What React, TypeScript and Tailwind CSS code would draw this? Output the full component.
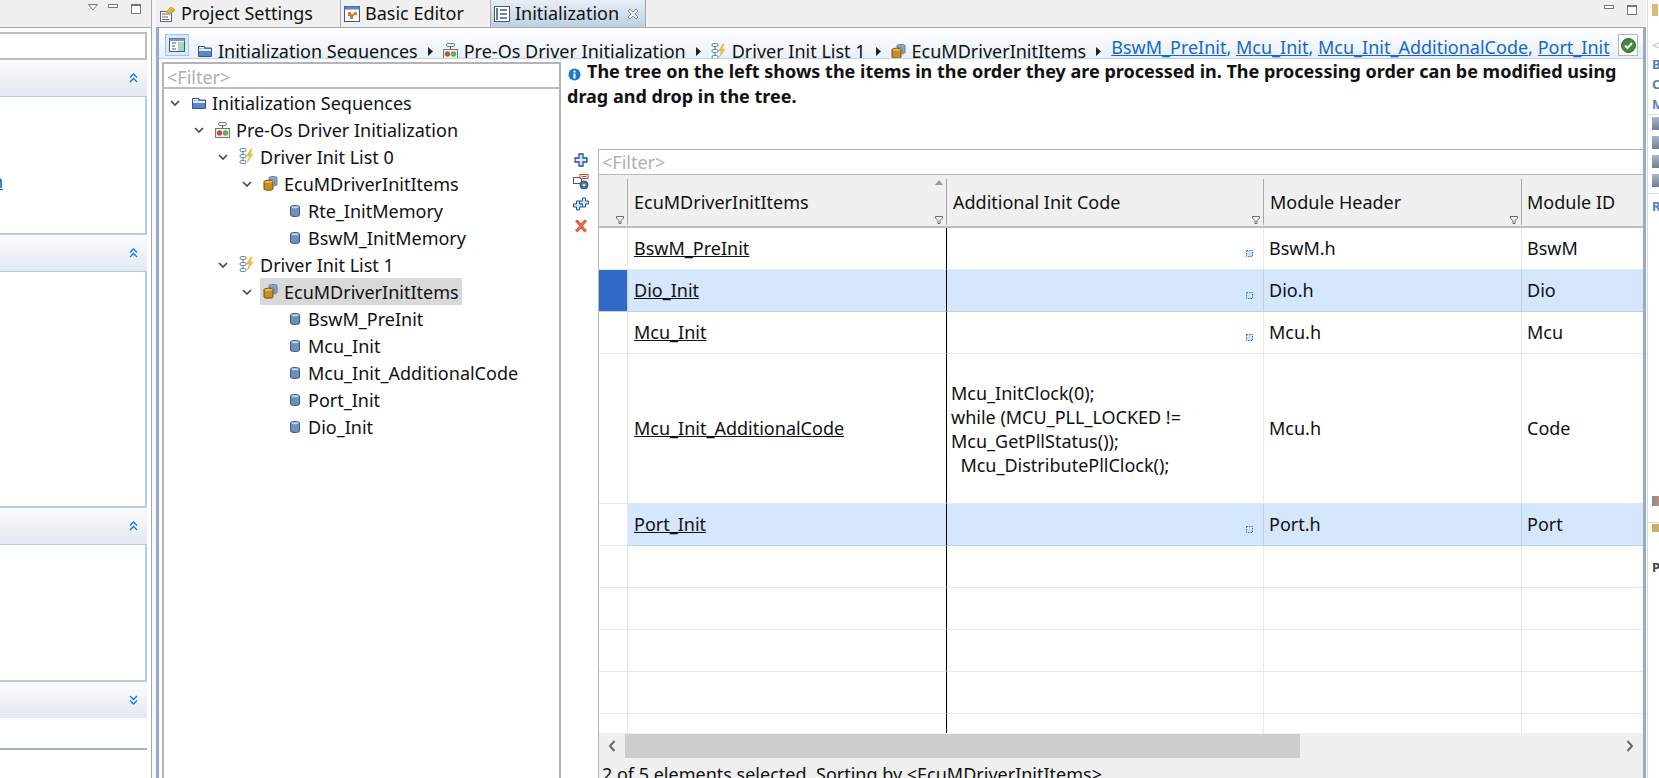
import type { ReactNode } from "react";

const font = "font-['Noto_Sans','Open_Sans',sans-serif]";

function FolderIcon() {
  return (
    <svg width="14" height="14" viewBox="0 0 14 14" className="shrink-0">
      <path d="M.5 2.500h6l1 1.500h6v8.500h-13z" fill="#5b86c0" stroke="#2f5a96" />
      <rect x="1" y="3" width="5" height="1.500" fill="#fff" />
      <rect x="1" y="5" width="12" height="2" fill="#dfe9f6" />
    </svg>
  );
}

function PreOsIcon() {
  return (
    <svg width="15" height="16" viewBox="0 0 15 16" className="shrink-0">
      <rect x="3.500" y=".5" width="8" height="3" rx="1.500" fill="#fff" stroke="#5b7fae" />
      <path d="M7.500 3.500v3" stroke="#b5304a" />
      <rect x=".5" y="6.500" width="14" height="9" fill="#eee" stroke="#777" />
      <circle cx="4.500" cy="11" r="2.300" fill="#e0463c" stroke="#8a2a22" strokeWidth=".6" />
      <circle cx="10.500" cy="11" r="2.300" fill="#5cc04a" stroke="#2d7a22" strokeWidth=".6" />
    </svg>
  );
}

function BoltListIcon() {
  return (
    <svg width="15" height="17" viewBox="0 0 15 17" className="shrink-0">
      <rect x="1" y=".5" width="6" height="3" rx="1.500" fill="#fff" stroke="#5b7fae" />
      <rect x="1" y="6.500" width="6" height="3" rx="1.500" fill="#fff" stroke="#5b7fae" />
      <rect x="1" y="12.500" width="6" height="3" rx="1.500" fill="#fff" stroke="#5b7fae" />
      <path d="M4 3.500v3M4 9.500v3" stroke="#5b7fae" />
      <path d="M12 1 7.500 8h3l-2 6 5.500-8h-3l2-5z" fill="#f1c22e" stroke="#c9971a" strokeWidth=".4" />
    </svg>
  );
}

function StackIcon() {
  return (
    <svg width="15" height="15" viewBox="0 0 15 15" className="shrink-0">
      <path d="M6 1.500c0-1.300 8-1.300 8 0v7c0 1-2 1.300-3 1.300V4H6z" fill="#8da7c9" stroke="#4d6a92" strokeWidth=".8" />
      <path d="M1 5.500c0-1.600 9-1.600 9 0v7.500c0 1.600-9 1.600-9 0z" fill="#c98f1e" stroke="#6f4c0c" />
      <ellipse cx="5.500" cy="5.800" rx="3.800" ry="1" fill="#e8bd58" />
    </svg>
  );
}

function CylinderIcon() {
  return (
    <svg width="10" height="12" viewBox="0 0 10 12" className="shrink-0">
      <path d="M.5 2c0-2 9-2 9 0v8c0 2-9 2-9 0z" fill="#6d8fbc" stroke="#3e5a82" />
      <ellipse cx="5" cy="2.300" rx="3.600" ry="1" fill="#c7d6ea" />
    </svg>
  );
}

function Chevron() {
  return (
    <svg width="10" height="6" viewBox="0 0 10 6">
      <path d="m1 1 4 4 4-4" fill="none" stroke="#444" strokeWidth="1.600" />
    </svg>
  );
}

function DoubleChevron({ down }: { down?: boolean }) {
  return (
    <svg width="9" height="10" viewBox="0 0 9 10" className={down ? "rotate-180" : ""}>
      <path d="m1 4.500 3.500-3.500 3.500 3.500M1 9l3.500-3.500L8 9" fill="none" stroke="#0b76d8" strokeWidth="1.300" />
    </svg>
  );
}

function MinButton() {
  return <div className="w-[10px] h-[4px] border border-[#777] bg-white" />;
}

function MaxButton() {
  return <div className="w-[10px] h-[10px] border border-[#777] border-t-2 bg-white" />;
}

function SmallArrow() {
  return (
    <svg width="5" height="9" viewBox="0 0 5 9" className="shrink-0">
      <path d="m0 0 5 4.500L0 9z" fill="#222" />
    </svg>
  );
}

function FilterGlyph() {
  return (
    <svg width="8" height="8" viewBox="0 0 8 8">
      <path d="M.5.5h7v1.500L5 4.500v3H3v-3L.5 2z" fill="#fff" stroke="#666" />
    </svg>
  );
}

function DotBox() {
  return (
    <svg width="7" height="7" viewBox="0 0 7 7" className="shrink-0">
      <rect x=".5" y=".5" width="6" height="6" fill="#cfe0f5" stroke="#2f78c8" strokeDasharray="1.500 1" />
    </svg>
  );
}

function PanelSection({ body, down, link }: { body: string; down?: boolean; link?: boolean }) {
  return (
    <>
      <div className="h-[36px] shrink-0 flex items-center justify-end pr-[9px] bg-gradient-to-b from-[#fbfcfd] to-[#e2e9f2]">
        <DoubleChevron down={down} />
      </div>
      <div className={`${body} shrink-0 border-r-2 border-b-2 border-t border-[#b7cbe1] bg-white overflow-hidden`}>
        {link && <div className="mt-[72px] -ml-[8px] text-[#0b63c4] underline leading-[24px]">n</div>}
      </div>
    </>
  );
}

function LeftPanel() {
  return (
    <div className="w-[151px] shrink-0 flex flex-col bg-white">
      <div className="h-[28px] shrink-0 bg-[#f0f0f0] border-b border-[#a8a8a8] flex items-center justify-end pr-[10px]">
        <svg width="10" height="7" viewBox="0 0 10 7" className="mb-[13px]">
          <path d="M.5.5h9L5 6z" fill="#fff" stroke="#777" />
        </svg>
        <div className="ml-[10px] mb-[15px]"><MinButton /></div>
        <div className="ml-[13px] mb-[9px]"><MaxButton /></div>
      </div>
      <div className="w-[147px] flex flex-col flex-1">
        <div className="h-[28px] mt-[4px] shrink-0 border-2 border-l-0 border-[#bdbdbd] bg-white" />
        <PanelSection body="h-[139px]" link />
        <PanelSection body="h-[237px]" />
        <PanelSection body="h-[138px]" />
        <div className="h-[36px] shrink-0 flex items-center justify-end pr-[9px] bg-gradient-to-b from-[#fbfcfd] to-[#e2e9f2]">
          <DoubleChevron down />
        </div>
        <div className="h-[32px] shrink-0 border-b-2 border-[#a9b6c2]" />
      </div>
    </div>
  );
}

type TreeItem = { level: 0 | 1 | 2 | 3 | 4; label: string; icon: ReactNode; selected?: boolean };

const levelPad = ["pl-[3px]", "pl-[27px]", "pl-[51px]", "pl-[75px]", "pl-[99px]"];

const treeItems: TreeItem[] = [
  { level: 0, label: "Initialization Sequences", icon: <FolderIcon /> },
  { level: 1, label: "Pre-Os Driver Initialization", icon: <PreOsIcon /> },
  { level: 2, label: "Driver Init List 0", icon: <BoltListIcon /> },
  { level: 3, label: "EcuMDriverInitItems", icon: <StackIcon /> },
  { level: 4, label: "Rte_InitMemory", icon: <CylinderIcon /> },
  { level: 4, label: "BswM_InitMemory", icon: <CylinderIcon /> },
  { level: 2, label: "Driver Init List 1", icon: <BoltListIcon /> },
  { level: 3, label: "EcuMDriverInitItems", icon: <StackIcon />, selected: true },
  { level: 4, label: "BswM_PreInit", icon: <CylinderIcon /> },
  { level: 4, label: "Mcu_Init", icon: <CylinderIcon /> },
  { level: 4, label: "Mcu_Init_AdditionalCode", icon: <CylinderIcon /> },
  { level: 4, label: "Port_Init", icon: <CylinderIcon /> },
  { level: 4, label: "Dio_Init", icon: <CylinderIcon /> },
];

function TreePane() {
  return (
    <div className="w-[399px] shrink-0 ml-[3px] mt-[3px] border-l-2 border-t-2 border-r-2 border-[#b4b4b4] flex flex-col bg-white">
      <div className="h-[25px] shrink-0 border-b-2 border-[#bdbdbd] pl-[3px] text-[#b0b0b0] leading-[26px]">&lt;Filter&gt;</div>
      <div>
        {treeItems.map((it, i) => (
          <div key={i} className={`h-[27px] flex items-center ${levelPad[it.level]}`}>
            <div className="w-[16px] shrink-0 flex justify-center">{it.level < 4 && <Chevron />}</div>
            <div className={`ml-[5px] h-[27px] flex items-center pl-[3px] pr-[3px] ${it.selected ? "bg-[#d9d9d9]" : ""}`}>
              <div className="w-[15px] shrink-0 flex justify-center">{it.icon}</div>
              <span className="ml-[6px] pt-[1px] whitespace-nowrap">{it.label}</span>
            </div>
          </div>
        ))}
      </div>
    </div>
  );
}

function BreadItem({ icon, label }: { icon: ReactNode; label: string }) {
  return (
    <div className="flex items-center gap-[6px] shrink-0">
      {icon}
      <span className="whitespace-nowrap">{label}</span>
    </div>
  );
}

function Breadcrumb() {
  return (
    <div className="h-[31px] shrink-0 border-b border-[#bcd3ea] bg-gradient-to-b from-[#ffffff] to-[#e9f0f8] flex pl-[6px] pr-[5px] overflow-hidden">
      <div className="w-[24px] h-[22px] mt-[6px] shrink-0 border border-[#9cc7ee] bg-[#d8e9f9] flex items-center justify-center">
        <svg width="16" height="14" viewBox="0 0 16 14">
          <rect x=".5" y=".5" width="15" height="13" fill="#fff" stroke="#44597a" />
          <rect x=".5" y=".5" width="15" height="2.500" fill="#7f99bd" />
          <rect x="9" y="4" width="6" height="9" fill="#a9d6c1" />
          <path d="M3 5h4M3 8h3M3 11h4" stroke="#44597a" />
        </svg>
      </div>
      <div className="flex-1 min-w-0 overflow-hidden flex items-center gap-[10px] pl-[9px] mt-[9px] h-[21px] leading-[26px] pt-[7px]">
        <BreadItem icon={<FolderIcon />} label="Initialization Sequences" />
        <SmallArrow />
        <BreadItem icon={<PreOsIcon />} label="Pre-Os Driver Initialization" />
        <SmallArrow />
        <BreadItem icon={<BoltListIcon />} label="Driver Init List 1" />
        <SmallArrow />
        <BreadItem icon={<StackIcon />} label="EcuMDriverInitItems" />
        <SmallArrow />
        <div className="flex shrink-0 whitespace-nowrap text-[#1668c8] -translate-y-1">
          <span className="underline">BswM_PreInit</span><span>,&nbsp;</span>
          <span className="underline">Mcu_Init</span><span>,&nbsp;</span>
          <span className="underline">Mcu_Init_AdditionalCode</span><span>,&nbsp;</span>
          <span className="underline">Port_Init</span>
        </div>
      </div>
      <div className="w-[20px] h-[22px] mt-[6px] shrink-0 border border-[#b5b5b5] bg-white flex items-center justify-center">
        <svg width="15" height="15" viewBox="0 0 15 15">
          <circle cx="7.500" cy="7.500" r="7" fill="#3f8a3f" stroke="#2b662b" />
          <path d="m4 7.500 2.500 2.500L11 5" fill="none" stroke="#fff" strokeWidth="2" />
        </svg>
      </div>
    </div>
  );
}

function SideTools() {
  return (
    <div className="w-[37px] shrink-0 flex flex-col items-center pl-[3px] pt-[4px] gap-[7px]">
      <svg width="14" height="14" viewBox="0 0 14 14">
        <path d="M5 1h4v4h4v4H9v4H5V9H1V5h4z" fill="#dbe8f8" stroke="#1f4fa0" strokeWidth="1.300" />
      </svg>
      <svg width="16" height="16" viewBox="0 0 16 16">
        <rect x="0.500" y="3.500" width="8" height="6" fill="#fff" stroke="#555" />
        <rect x="7" y=".5" width="8" height="4" fill="#fff" stroke="#e23a1e" />
        <path d="M8.500 2.500h5" stroke="#2f78c8" />
        <circle cx="11" cy="11" r="4" fill="#4f74ad" stroke="#2e4f85" />
        <circle cx="11" cy="11" r="1.300" fill="#dfe9f6" />
      </svg>
      <svg width="16" height="14" viewBox="0 0 16 14">
        <path d="M9.500 1h3v3h3v3h-3v3h-3V7h-3V4h3z" fill="#dbe8f8" stroke="#1f4fa0" />
        <path d="M3.500 4h3v3h3v3h-3v3h-3v-3H.5V7h3z" fill="#dbe8f8" stroke="#1f4fa0" />
      </svg>
      <svg width="14" height="14" viewBox="0 0 14 14" className="mt-[1px]">
        <path d="m1.500 2 2-1 3.500 4 3.500-4 2 1L8.500 7l4 4.500-2 1.500L7 9l-3.500 4-2-1.500 4-4.500z" fill="#ef6a3c" stroke="#c6351a" strokeWidth=".7" />
      </svg>
    </div>
  );
}

const c0 = "w-[29px] shrink-0";
const c1 = "w-[319px] shrink-0";
const c2 = "w-[317px] shrink-0";
const c3 = "w-[258px] shrink-0";

function HeaderCell({ width, label, sort }: { width: string; label: string; sort?: boolean }) {
  return (
    <div className={`${width} h-[46px] mt-[4px] border-r border-[#a8a8a8] relative flex items-center pl-[6px]`}>
      <span className="whitespace-nowrap">{label}</span>
      {sort && (
        <svg width="8" height="5" viewBox="0 0 8 5" className="absolute right-[3px] top-[1px]">
          <path d="M4 0l4 5H0z" fill="#999" />
        </svg>
      )}
      <div className="absolute right-[3px] bottom-[1px] flex"><FilterGlyph /></div>
    </div>
  );
}

type Row = { name: string; header: string; id: string; tall?: boolean; picked?: boolean; mark?: boolean };

const rows: Row[] = [
  { name: "BswM_PreInit", header: "BswM.h", id: "BswM" },
  { name: "Dio_Init", header: "Dio.h", id: "Dio", picked: true, mark: true },
  { name: "Mcu_Init", header: "Mcu.h", id: "Mcu" },
  { name: "Mcu_Init_AdditionalCode", header: "Mcu.h", id: "Code", tall: true },
  { name: "Port_Init", header: "Port.h", id: "Port", picked: true },
  { name: "", header: "", id: "" },
  { name: "", header: "", id: "" },
  { name: "", header: "", id: "" },
  { name: "", header: "", id: "" },
  { name: "", header: "", id: "" },
];

function TableRow({ row }: { row: Row }) {
  const h = row.tall ? "h-[150px]" : "h-[42px]";
  const bg = row.picked ? "bg-[#d5e7fd] border-[#c3d0de]" : "bg-white border-[#e8e8e8]";
  return (
    <div className={`flex ${h} shrink-0 overflow-hidden`}>
      <div className={`${c0} border-b border-r ${row.mark ? "bg-[#3169c6] border-[#c3d0de]" : "bg-white border-[#e8e8e8]"}`} />
      <div className={`${c1} border-b border-r border-r-black flex items-center pl-[6px] ${bg}`}>
        <span className="underline whitespace-nowrap">{row.name}</span>
      </div>
      <div className={`${c2} border-b border-r flex ${bg}`}>
        {row.tall ? (
          <div className="pl-[4px] self-center leading-[24px] whitespace-pre-wrap w-[270px]">
            {"Mcu_InitClock(0);\nwhile (MCU_PLL_LOCKED !=\nMcu_GetPllStatus());\n  Mcu_DistributePllClock();"}
          </div>
        ) : (
          row.name && <div className="ml-auto mr-[10px] mt-[22px]"><DotBox /></div>
        )}
      </div>
      <div className={`${c3} border-b border-r flex items-center pl-[5px] ${bg}`}>{row.header}</div>
      <div className={`flex-1 border-b flex items-center pl-[5px] ${bg}`}>{row.id}</div>
    </div>
  );
}

function InitTable() {
  return (
    <div className="flex-1 min-w-0 border-l border-[#b0b8c4] flex flex-col">
      <div className="h-[26px] shrink-0 border-t border-b border-[#b4b8be] pl-[3px] text-[#b0b0b0] leading-[25px]">&lt;Filter&gt;</div>
      <div className="h-[53px] shrink-0 bg-[#f0f0f0] border-b-2 border-[#bcbcbc] flex">
        <HeaderCell width={c0} label="" />
        <HeaderCell width={c1} label="EcuMDriverInitItems" sort />
        <HeaderCell width={c2} label="Additional Init Code" />
        <HeaderCell width={c3} label="Module Header" />
        <div className="flex-1 flex items-center pl-[5px] mt-[4px] h-[46px]">Module ID</div>
      </div>
      <div className="flex-1 min-h-0 flex flex-col overflow-hidden">
        {rows.map((r, i) => <TableRow key={i} row={r} />)}
      </div>
      <div className="h-[25px] shrink-0 bg-[#f0f0f0] flex items-center">
        <div className="w-[26px] flex justify-center">
          <svg width="8" height="12" viewBox="0 0 8 12"><path d="M6.500 1 2 6l4.500 5" fill="none" stroke="#666" strokeWidth="2" /></svg>
        </div>
        <div className="w-[675px] h-[24px] bg-[#cdcdcd]" />
        <div className="flex-1" />
        <div className="w-[26px] flex justify-center">
          <svg width="8" height="12" viewBox="0 0 8 12"><path d="M1.500 1 6 6l-4.500 5" fill="none" stroke="#666" strokeWidth="2" /></svg>
        </div>
      </div>
      <div className="h-[20px] shrink-0 bg-[#f0f0f0] pl-[3px] leading-[32px] overflow-hidden whitespace-nowrap">
        2 of 5 elements selected. Sorting by &lt;EcuMDriverInitItems&gt;
      </div>
    </div>
  );
}

function Tab({ width, label, icon, active }: { width: string; label: string; icon: ReactNode; active?: boolean }) {
  return (
    <div className={`${width} h-[27px] shrink-0 flex items-center border-r border-[#a8a8a8] pl-[3px] ${active ? "bg-gradient-to-b from-[#e9eef5] to-[#bcd0e6]" : ""}`}>
      {icon}
      <span className="ml-[5px] whitespace-nowrap">{label}</span>
      {active && (
        <svg width="12" height="12" viewBox="0 0 12 12" className="ml-[8px] shrink-0">
          <path d="m1 3 2-2 3 3 3-3 2 2-3 3 3 3-2 2-3-3-3 3-2-2 3-3z" fill="#f4f4f4" stroke="#8a8a8a" />
        </svg>
      )}
    </div>
  );
}

function EditorPane() {
  return (
    <div className="flex-1 min-w-0 flex flex-col">
      <div className="h-[28px] shrink-0 bg-[#f0f0f0] border-b border-[#a8a8a8] flex pl-[1px]">
        <Tab width="w-[184px]" label="Project Settings" icon={
          <svg width="16" height="16" viewBox="0 0 16 16" className="shrink-0">
            <rect x=".5" y="5.500" width="11" height="10" fill="#fff" stroke="#667" />
            <path d="M2 8h8M2 11h6M2 13.500h7" stroke="#667" />
            <path d="m6 6 5-5 4 3-5 4z" fill="#e8b53a" stroke="#a87c1a" strokeWidth=".6" />
          </svg>
        } />
        <Tab width="w-[150px]" label="Basic Editor" icon={
          <svg width="16" height="16" viewBox="0 0 16 16" className="shrink-0">
            <rect x=".5" y=".5" width="15" height="15" fill="#fff" stroke="#44597a" />
            <rect x=".5" y=".5" width="15" height="3" fill="#5b86c0" />
            <path d="M4 6h3v2h3V6h3v3h-3v1H9v3H6v-3H4z" fill="#e8772e" />
          </svg>
        } />
        <Tab width="w-[155px]" active label="Initialization" icon={
          <svg width="16" height="16" viewBox="0 0 16 16" className="shrink-0">
            <rect x=".5" y=".5" width="15" height="15" fill="#fff" stroke="#44597a" />
            <rect x="2" y="2" width="2" height="12" fill="#5b7fae" />
            <path d="M6 4h7M6 8h7M6 12h7" stroke="#44597a" strokeWidth="1.500" />
          </svg>
        } />
        <div className="flex-1 flex justify-end items-start gap-[13px] pr-[9px] pt-[4px]">
          <div className="mt-[1px]"><MinButton /></div>
          <div className="mt-[1px]"><MaxButton /></div>
        </div>
      </div>
      <div className="flex-1 min-h-0 flex flex-col border-l-[3px] border-r-[3px] border-[#93abcc] bg-white">
        <Breadcrumb />
        <div className="flex-1 min-h-0 flex">
          <TreePane />
          <div className="flex-1 min-w-0 flex flex-col">
            <div className="h-[90px] shrink-0 pl-[6px] pr-[20px] font-bold leading-[25px]">
              <svg width="13" height="13" viewBox="0 0 13 13" className="inline-block mr-[6px] mb-[-2px] ml-[1px]">
                <circle cx="6.500" cy="6.500" r="6" fill="#1f78c8" />
                <rect x="5.500" y="5.500" width="2" height="5" fill="#fff" />
                <rect x="5.500" y="2.500" width="2" height="2" fill="#fff" />
              </svg>
              The tree on the left shows the items in the order they are processed in. The processing order can be modified using drag and drop in the tree.
            </div>
            <div className="flex-1 min-h-0 flex">
              <SideTools />
              <InitTable />
            </div>
          </div>
        </div>
      </div>
    </div>
  );
}

function RightStrip() {
  const blue = "h-[20px] leading-[20px] text-[#4a84b8] font-bold";
  const icon = "w-[7px] h-[13px] mb-[6px] bg-gradient-to-b from-[#a8b8cc] to-[#6f7f96]";
  return (
    <div className="w-[12px] shrink-0 overflow-hidden bg-white flex flex-col pl-[4px] text-[13px] border-l border-[#d8d8d8] ml-[1px]">
      <div className="h-[36px] w-[7px] pt-[4px]"><div className="w-[6px] h-[12px] bg-[#d8bc78]" /></div>
      <div className="h-[18px] text-[#b5b5b5] leading-[18px]">&lt;</div>
      <div className={blue}>B</div>
      <div className={blue}>C</div>
      <div className={blue}>M</div>
      <div className="h-px bg-[#ddd] mb-[2px] -ml-[4px]" />
      <div className={icon} />
      <div className={icon} />
      <div className={icon} />
      <div className={icon} />
      <div className="h-px bg-[#ddd] -ml-[4px]" />
      <div className={`${blue} mt-[2px]`}>R</div>
      <div className="mt-[280px] w-[8px] h-[10px] bg-gradient-to-r from-[#7a86a0] to-[#d09060]" />
      <div className="h-px bg-[#ddd] mt-[16px] -ml-[4px]" />
      <div className="mt-[1px] w-[8px] h-[8px] bg-[#c8b060]" />
      <div className="mt-[26px] text-[#444] font-bold h-[18px]">P</div>
    </div>
  );
}

export default function App() {
  return (
    <div className={`${font} w-[1659px] h-[778px] overflow-hidden flex text-[18px] text-[#111] bg-white`}>
      <LeftPanel />
      <div className="w-[5px] shrink-0 border-l border-[#a8a8a8] bg-[#f7f7f7]" />
      <EditorPane />
      <RightStrip />
    </div>
  );
}
